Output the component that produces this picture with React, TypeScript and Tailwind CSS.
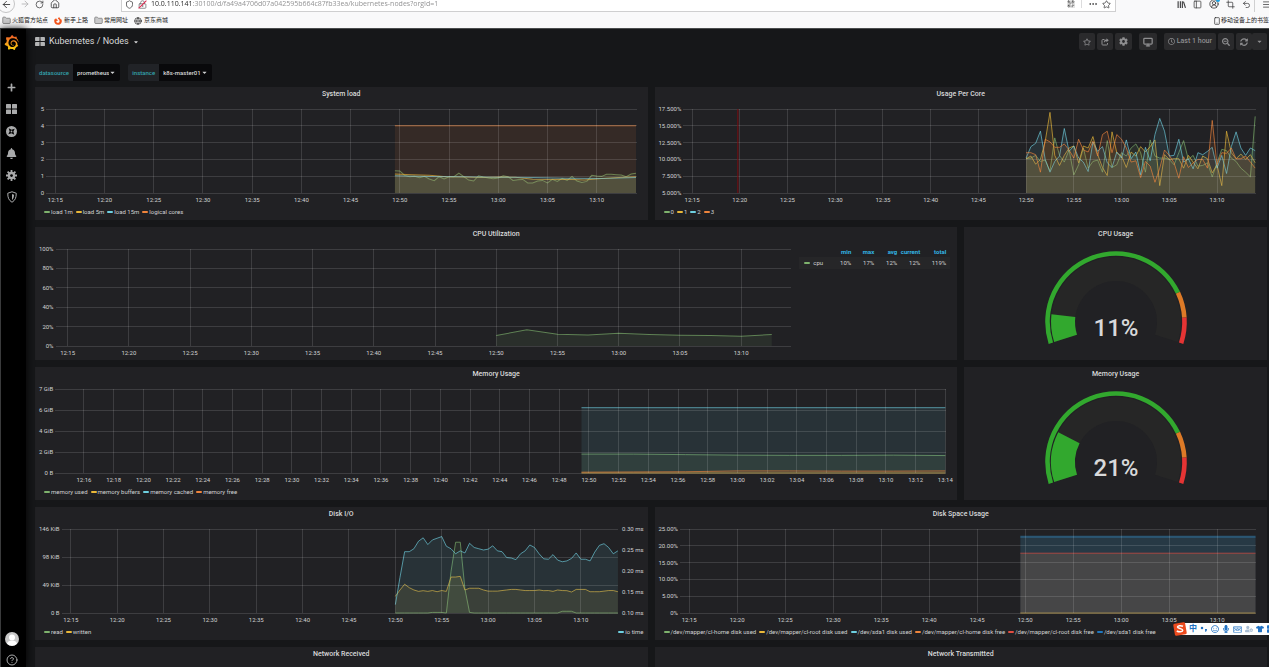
import type { ReactNode } from 'react';
import { SiGrafana } from 'react-icons/si';
import {
  FaBell,
  FaCaretDown,
  FaCog,
  FaPlus,
  FaRegClock,
  FaRegStar,
  FaSearchMinus,
  FaSyncAlt,
  FaTshirt,
  FaMicrophone,
  FaFirefoxBrowser,
  FaRegKeyboard,
  FaRegSmile,
  FaUserCog,
} from 'react-icons/fa';
import {
  ArrowLeft,
  ArrowRight,
  CircleHelp,
  CircleUserRound,
  Crop,
  Ellipsis,
  Folder,
  Globe,
  House,
  LockKeyhole,
  Menu,
  Monitor,
  PanelLeft,
  QrCode,
  RotateCw,
  Shield,
  Smartphone,
  Star,
  Undo2,
} from 'lucide-react';

const GREEN = '#7eb26d';
const YELLOW = '#eab839';
const BLUE = '#6ed0e0';
const ORANGE = '#ef843c';
const RED = '#e24d42';
const DARK_BLUE = '#1f78c1';

// minutes after 12:00
const RANGE_START = 14.05;
const RANGE_MINUTES = 60;

type Series = {
  color: string;
  start: number;
  step: number;
  values: number[];
  range?: [number, number];
  width?: number;
  fillOpacity?: number;
};

type LegendItem = { label: string; color: string };

const fiveMinuteTicks = [15, 20, 25, 30, 35, 40, 45, 50, 55, 60, 65, 70];
const twoMinuteTicks = Array.from({ length: 30 }, (_, i) => 16 + i * 2);

const formatTime = (minutes: number) =>
  `${12 + Math.floor(minutes / 60)}:${String(minutes % 60).padStart(2, '0')}`;

const loadSeries: Series[] = [
  {
    color: GREEN,
    start: 49.5,
    step: 0.5,
    values: [
      1.33, 1.31, 1.05, 0.97, 0.99, 0.91, 0.99, 0.83, 0.73, 0.97, 0.83, 0.97, 0.97, 1.19, 0.97, 0.77, 0.71,
      1.03, 0.95, 0.89, 0.85, 0.89, 1.03, 0.97, 0.75, 0.79, 0.81, 0.6, 0.6, 0.71, 0.75, 0.6, 0.81, 0.69,
      0.87, 0.75, 0.99, 0.71, 0.63, 0.69, 1.05, 1.01, 0.99, 1.11, 1.11, 1.09, 1.07, 0.97, 1.13, 1.17,
    ],
  },
  {
    color: YELLOW,
    start: 49.5,
    step: 1.75,
    values: [1.13, 1.08, 1.05, 0.97, 0.95, 0.93, 0.95, 0.94, 0.82, 0.8, 0.82, 0.78, 0.86, 0.93, 0.97],
  },
  { color: BLUE, start: 49.5, step: 3.5, values: [1.03, 0.98, 0.96, 0.94, 0.93, 0.88, 0.87, 0.92] },
  { color: ORANGE, start: 49.5, step: 24.5, values: [4, 4] },
];

const coreSeries: Series[] = [
  {
    color: GREEN,
    start: 50,
    step: 0.5,
    values: [
      10.1, 10.2, 10.6, 9.7, 9.9, 8.3, 13.2, 10.6, 9.6, 11.4, 7.7, 9.2, 11.7, 8.7, 9.7, 9.9, 8.1, 12.8, 8.8,
      9.2, 11, 10.5, 11.7, 12.3, 11, 8.1, 12.9, 10.5, 10.2, 10.2, 10, 9.2, 11, 12.8, 10, 10.6, 9, 9.1, 9.5,
      7.4, 9.5, 11.5, 11.3, 10.2, 9.7, 8.7, 8.1, 7.4, 16.4,
    ],
  },
  {
    color: YELLOW,
    start: 50,
    step: 0.5,
    values: [
      10.1, 10.5, 9.3, 10, 12.7, 17, 10.6, 9.1, 10.6, 11.7, 12, 9.5, 12, 11.7, 13.4, 10.7, 8.8, 7.6, 14.1,
      11, 10.5, 8.8, 11.1, 10.5, 11.9, 11.1, 11.9, 12.9, 6.1, 10.7, 10, 10.1, 10.1, 8.7, 10.6, 9.6, 8.6,
      10.5, 10.1, 8, 9.2, 6.1, 14.2, 11, 10.1, 10.8, 10, 10.7, 9.5,
    ],
  },
  {
    color: BLUE,
    start: 50,
    step: 0.5,
    values: [
      10.2, 11.9, 12.4, 14.2, 10, 8.1, 9.7, 10.5, 14.6, 11.2, 12, 10.2, 9.6, 8.2, 12.6, 11.2, 11.9, 9.5, 8.8,
      11.1, 10.2, 12.9, 10.1, 11.1, 7.7, 11.8, 9.8, 13.7, 16.1, 14.2, 10.5, 10.6, 13, 9.6, 10.1, 8.6, 11,
      10.7, 11.2, 11.8, 8.7, 10.6, 7.9, 11.9, 14.1, 11.7, 10.6, 11.7, 11.3,
    ],
  },
  {
    color: ORANGE,
    start: 50,
    step: 0.5,
    values: [
      11, 11, 10.7, 8.1, 13, 12.6, 11.8, 11.8, 12.3, 11.4, 10.2, 13, 11.4, 11.1, 12.7, 10.5, 13.7, 14.2, 11,
      13.7, 13, 11.7, 9.6, 9.8, 7.3, 9.7, 9, 6.6, 8.7, 11.4, 10.6, 9.5, 7.2, 10.4, 8.8, 9.5, 10, 10, 8.7,
      15.8, 9.2, 11, 10.9, 11.7, 10.1, 10.1, 10.5, 9.6, 8.7,
    ],
  },
];

const cpuSeries: Series[] = [
  { color: GREEN, start: 50, step: 2.5, values: [10.8, 16.7, 12, 11.4, 13.2, 11.8, 11.1, 10.8, 10, 11.8] },
];

const memorySeries: Series[] = [
  { color: GREEN, start: 49.5, step: 3.5, values: [1.8, 1.8, 1.75, 1.7, 1.68, 1.68, 1.7, 1.66] },
  { color: YELLOW, start: 49.5, step: 24.5, values: [0, 0] },
  { color: BLUE, start: 49.5, step: 24.5, values: [6.22, 6.22] },
  { color: ORANGE, start: 49.5, step: 3.5, values: [0.08, 0.1, 0.12, 0.2, 0.2, 0.18, 0.18, 0.2] },
];

const diskIoSeries: Series[] = [
  {
    color: GREEN,
    start: 50,
    step: 0.5,
    values: [
      0, 0, 0, 0, 0, 0, 0, 0, 1, 1, 1, 0, 72, 123, 123, 42, 1, 0, 0, 0, 0, 0, 0, 0, 0, 0, 0, 0, 0, 0, 0, 0, 0,
      0, 0, 0, 3, 3, 3, 0, 0, 0, 0, 0, 0, 0, 0, 0, 0,
    ],
  },
  {
    color: YELLOW,
    start: 50,
    step: 0.5,
    values: [
      29, 40, 50, 44, 40, 37.6, 38.8, 37.6, 39, 37, 39, 37.6, 62.5, 62.5, 63.7, 40, 43, 43, 43, 40, 38, 38, 38,
      39, 40, 41, 41, 40, 39, 39, 39, 40, 38.8, 39, 37.6, 40, 39, 38.8, 36.5, 41, 41, 41, 37, 37, 37, 38, 39,
      39, 37,
    ],
  },
  {
    color: BLUE,
    start: 50,
    step: 0.5,
    range: [0.1, 0.3],
    values: [
      0.12, 0.185, 0.246, 0.246, 0.253, 0.271, 0.279, 0.263, 0.274, 0.278, 0.282, 0.259, 0.253, 0.241, 0.248,
      0.243, 0.266, 0.256, 0.253, 0.25, 0.252, 0.26, 0.248, 0.246, 0.232, 0.231, 0.227, 0.241, 0.248, 0.262,
      0.256, 0.241, 0.229, 0.228, 0.239, 0.226, 0.222, 0.224, 0.23, 0.243, 0.228, 0.228, 0.224, 0.245, 0.261,
      0.265, 0.256, 0.241, 0.248,
    ],
  },
];

const diskSpaceSeries: Series[] = [
  { color: YELLOW, start: 49.5, step: 24.5, values: [0, 0] },
  { color: DARK_BLUE, start: 49.5, step: 24.5, values: [22.7, 22.7], width: 0 },
  { color: BLUE, start: 49.5, step: 24.5, values: [22.7, 22.7], width: 0 },
  { color: '#2f7099', start: 49.5, step: 24.5, values: [22.7, 22.7], width: 2, fillOpacity: 0 },
  { color: '#c37f4f', start: 49.5, step: 24.5, values: [17.8, 17.8], width: 0, fillOpacity: 0.2 },
  { color: RED, start: 49.5, step: 24.5, values: [17.8, 17.8], fillOpacity: 0 },
];

function Plot({
  ticks,
  rows,
  range,
  series,
  height,
  marker,
}: {
  ticks: number[];
  rows: number;
  range: [number, number];
  series: Series[];
  height: number;
  marker?: number;
}) {
  const toX = (minutes: number) => ((minutes - RANGE_START) / RANGE_MINUTES) * 100;

  const toPoints = (s: Series) => {
    const [min, max] = s.range ?? range;
    return s.values.map(
      (v, i) => `${toX(s.start + i * s.step).toFixed(3)},${(height - ((v - min) / (max - min)) * height).toFixed(2)}`
    );
  };

  return (
    <svg className="block w-full min-w-0 flex-1 overflow-visible" height={height}>
      <svg width="100%" height={height} viewBox={`0 0 100 ${height}`} preserveAspectRatio="none" overflow="visible">
        {series.map((s, i) => {
          const points = toPoints(s);
          const endX = toX(s.start + (s.values.length - 1) * s.step);
          return (
            <g key={i}>
              <polygon
                points={`${toX(s.start)},${height} ${points.join(' ')} ${endX},${height}`}
                fill={s.color}
                fillOpacity={s.fillOpacity ?? 0.1}
              />
              <polyline
                points={points.join(' ')}
                fill="none"
                stroke={s.color}
                strokeOpacity={0.65}
                strokeWidth={s.width ?? 1}
                vectorEffect="non-scaling-stroke"
              />
            </g>
          );
        })}
      </svg>
      {Array.from({ length: rows + 1 }, (_, i) => {
        const y = (height / rows) * i;
        return <line key={i} x1="0" x2="100%" y1={y} y2={y} stroke="#fff" strokeOpacity={0.13} shapeRendering="crispEdges" />;
      })}
      {ticks.map((t) => (
        <g key={t}>
          <line x1={`${toX(t)}%`} x2={`${toX(t)}%`} y1="0" y2={height} stroke="#fff" strokeOpacity={0.13} shapeRendering="crispEdges" />
          <text x={`${toX(t)}%`} y={height + 9} textAnchor="middle" fill="#d0d1d2" fontSize="6">
            {formatTime(t)}
          </text>
        </g>
      ))}
      {marker && (
        <line x1={`${toX(marker)}%`} x2={`${toX(marker)}%`} y1="0" y2={height} stroke="#7d0c10" />
      )}
    </svg>
  );
}

function AxisLabels({ labels, right }: { labels: string[]; right?: boolean }) {
  return (
    <div
      className={`-my-1 flex min-w-[11px] flex-col justify-between pl-1 text-[6px] leading-2 whitespace-nowrap ${
        right ? 'pr-1 text-left' : 'pr-0.5 text-right'
      }`}
    >
      {labels.map((label) => (
        <span key={label}>{label}</span>
      ))}
    </div>
  );
}

function Swatch({ color }: { color: string }) {
  return <span className="h-0.5 w-1.5 rounded-sm" style={{ backgroundColor: color }} />;
}

function Legend({ items }: { items: LegendItem[] }) {
  return (
    <ul className="flex gap-[3px] text-[6px] leading-3 whitespace-nowrap">
      {items.map((item) => (
        <li key={item.label} className="flex items-center gap-px">
          <Swatch color={item.color} />
          {item.label}
        </li>
      ))}
    </ul>
  );
}

function Panel({ title, className = '', children }: { title: string; className?: string; children?: ReactNode }) {
  return (
    <section className={`min-w-0 bg-[#212124] pb-0.5 ${className}`}>
      <h2 className="mb-[7px] text-center text-[7px] leading-[15px] font-medium text-[#d8d9da]">{title}</h2>
      {children}
    </section>
  );
}

function Gauge({ value }: { value: number }) {
  const point = (percent: number, r: number) => {
    const angle = ((-198 + percent * 2.16) * Math.PI) / 180;
    return `${(72 + r * Math.cos(angle)).toFixed(2)} ${(73 + r * Math.sin(angle)).toFixed(2)}`;
  };
  const band = (from: number, to: number, inner: number, outer: number) => {
    const large = (to - from) * 2.16 > 180 ? 1 : 0;
    return `M${point(from, outer)}A${outer} ${outer} 0 ${large} 1 ${point(to, outer)}L${point(to, inner)}A${inner} ${inner} 0 ${large} 0 ${point(from, inner)}Z`;
  };

  return (
    <svg viewBox="0 0 144 97" className="mx-auto block h-[97px] w-36">
      <path d={band(0, 100, 41, 65)} fill="#262626" />
      <path d={band(0, value, 41, 65)} fill="#32a82e" />
      <path d={band(0, 80, 66.2, 70.8)} fill="#32a82e" />
      <path d={band(80, 90, 66.2, 70.8)} fill="#dd7a27" />
      <path d={band(90, 100, 66.2, 70.8)} fill="#e53434" />
      <text x="72" y="87" textAnchor="middle" fontSize="24" fontWeight="500" fill="#d8d9da">
        {Math.floor(value)}%
      </text>
    </svg>
  );
}

function BrowserBar() {
  return (
    <div className="shrink-0 border-b border-[#4a4d4e] bg-[#f9f9fa] text-[#3c3c3d]">
      <div className="-mt-1 flex h-4 items-center">
        <div className="flex w-[121px] items-center gap-[5px]">
          <button aria-label="Back" className="-ml-[3px] flex size-[18px] items-center justify-center rounded-full border border-[#c4c4c5]">
            <ArrowLeft size={11} />
          </button>
          <button aria-label="Forward" className="text-[#b0b0b1]">
            <ArrowRight size={10} />
          </button>
          <button aria-label="Reload">
            <RotateCw size={9} />
          </button>
          <button aria-label="Home" className="ml-px">
            <House size={10} />
          </button>
        </div>
        <div className="flex h-4 min-w-0 flex-1 items-center border border-[#cfcfd0] bg-white pr-1 pl-[3px]">
          <Shield size={9} />
          <span className="relative mx-1 text-[#6b6b6c]">
            <LockKeyhole size={9} />
            <span className="absolute top-1 -left-px h-px w-[11px] -rotate-45 bg-[#e0284f]" />
          </span>
          <input
            aria-label="Address"
            className="min-w-0 flex-1 bg-[linear-gradient(to_right,#222_42px,#8c8c8d_42px)] bg-clip-text font-['Open_Sans',sans-serif] text-[7px] text-transparent outline-none"
            defaultValue="10.0.110.141:30100/d/fa49a4706d07a042595b664c87fb33ea/kubernetes-nodes?orgId=1"
          />
          <QrCode size={8} />
          <span className="mx-1.5 h-2 w-px bg-[#dcdcdd]" />
          <button aria-label="Page actions">
            <Ellipsis size={10} />
          </button>
          <button aria-label="Bookmark page" className="ml-1">
            <Star size={9} />
          </button>
        </div>
        <div className="ml-[61px] flex items-center gap-[7px]">
          <svg viewBox="0 0 16 16" className="size-[9px]" stroke="currentColor" strokeWidth="2">
            <path d="M2 2v12M6 2v12M9.500 2v12M11.500 3l3.500 11" fill="none" />
          </svg>
          <PanelLeft size={9} />
          <span className="relative">
            <CircleUserRound size={10} />
            <span className="absolute -top-px -right-px size-1 rounded-full bg-[#16a3e8]" />
          </span>
          <Crop size={9} />
          <Undo2 size={9} />
          <span className="-ml-1 h-4 w-px bg-[#d0d0d1]" />
          <Menu size={9} className="-mr-0.5" />
        </div>
      </div>
      <nav className="flex h-4 items-center gap-1.5 overflow-hidden pt-px pl-0.5 font-['Liberation_Sans','Noto_Sans_CJK_SC',sans-serif] text-[6px] whitespace-nowrap text-[#222]">
        <a href="#" className="flex items-center gap-px">
          <Folder size={9} className="fill-[#c9c9ca] text-[#757576]" />
          火狐官方站点
        </a>
        <a href="#" className="flex items-center gap-0.5">
          <FaFirefoxBrowser size={8} className="text-[#f2541b]" />
          新手上路
        </a>
        <a href="#" className="flex items-center gap-px">
          <Folder size={9} className="fill-[#c9c9ca] text-[#757576]" />
          常用网址
        </a>
        <a href="#" className="flex items-center gap-0.5">
          <Globe size={8} />
          京东商城
        </a>
        <a href="#" className="ml-auto flex items-center">
          <Smartphone size={8} />
          移动设备上的书签
        </a>
      </nav>
    </div>
  );
}

function DashboardsIcon({ className }: { className: string }) {
  return (
    <svg viewBox="0 0 22 20" className={className} fill="currentColor">
      <rect x="0" y="0" width="10" height="9" rx="1" />
      <rect x="12" y="0" width="10" height="9" rx="1" />
      <rect x="0" y="11" width="10" height="9" rx="1" />
      <rect x="12" y="11" width="10" height="9" rx="1" />
    </svg>
  );
}

// eight-tooth cog, fuller than the Font Awesome one
function CogIcon({ className }: { className: string }) {
  return (
    <svg viewBox="0 0 24 24" className={className}>
      <g stroke="currentColor" strokeWidth="4">
        <path d="M12 0v24M0 12h24M3.500 3.500l17 17M20.500 3.500l-17 17" />
      </g>
      <circle cx="12" cy="12" r="8" fill="currentColor" />
      <circle cx="12" cy="12" r="3" className="fill-black" />
    </svg>
  );
}

function Sidebar() {
  const items = [
    { label: 'Create', icon: <FaPlus size={9} /> },
    { label: 'Dashboards', icon: <DashboardsIcon className="h-2.5 w-[11px]" /> },
    {
      label: 'Explore',
      icon: (
        <svg viewBox="0 0 24 24" className="size-[11px]">
          <circle cx="12" cy="12" r="12" fill="currentColor" />
          <path d="M6 5l6 3 7-2-3 6 2 7-6-3-7 2 3-6z" fill="#000" />
          <circle cx="12" cy="12" r="2" fill="currentColor" />
        </svg>
      ),
    },
    { label: 'Alerting', icon: <FaBell size={11} /> },
    { label: 'Configuration', icon: <CogIcon className="size-[11px]" /> },
    {
      label: 'Server Admin',
      icon: (
        <svg viewBox="0 0 20 24" className="h-3 w-2.5" fill="none" stroke="currentColor" strokeWidth="2">
          <path d="M10 1.500l8.500 3c0 9-2 14-8.500 18-6.500-4-8.500-9-8.500-18z" />
          <path d="M10 6l4 1.500c0 5-1 8-4 10.500z" fill="currentColor" stroke="none" />
        </svg>
      ),
    },
  ];

  return (
    <aside className="z-10 flex w-[26px] shrink-0 flex-col items-center border-l border-[#3a3b3c] bg-black pr-1 text-[#a9aaab] shadow-[0_0_8px_#000]">
      <a href="#" aria-label="Grafana" className="mt-1.5">
        <svg width="0" height="0" className="absolute">
          <linearGradient id="logo" x1="0" y1="1" x2="0" y2="0">
            <stop offset="0" stopColor="#fbd30f" />
            <stop offset="1" stopColor="#f05a28" />
          </linearGradient>
        </svg>
        <SiGrafana size={15} fill="url(#logo)" />
      </a>
      <nav className="mt-[26px] flex flex-col">
        {items.map((item) => (
          <a key={item.label} href="#" aria-label={item.label} className="flex h-[22px] items-center justify-center">
            {item.icon}
          </a>
        ))}
      </nav>
      <a href="#" aria-label="Profile" className="mt-auto mb-2">
        <svg viewBox="0 0 28 28" className="size-3.5">
          <circle cx="14" cy="14" r="14" fill="#c9c9c9" />
          <circle cx="14" cy="11" r="6" fill="#fff" />
          <path d="M4 23.500c1-5 5-6 10-6s9 1 10 6a14 14 0 0 1-20 0z" fill="#fff" />
        </svg>
      </a>
      <a href="#" aria-label="Help" className="mb-px">
        <CircleHelp size={12} />
      </a>
    </aside>
  );
}

function ToolButton({ label, children, className = '' }: { label: string; children: ReactNode; className?: string }) {
  return (
    <button
      aria-label={label}
      className={`flex h-[17px] items-center justify-center gap-0.5 rounded-xs bg-[#2a2a2c] px-1 text-[#8e8e90] ${className}`}
    >
      {children}
    </button>
  );
}

function Variable({ name, value }: { name: string; value: string }) {
  return (
    <div className="flex h-[17px] items-stretch overflow-hidden rounded-xs text-[6px] leading-[17px] font-medium">
      <label htmlFor={name} className="bg-[#212327] px-1 text-[#33a2ad]">
        {name}
      </label>
      <div className="flex items-center bg-[#09090b] px-1">
        <select id={name} className="field-sizing-content appearance-none bg-transparent text-[#d8d9da] outline-none">
          <option>{value}</option>
        </select>
        <FaCaretDown size={7} />
      </div>
    </div>
  );
}

const cpuStats = [
  { label: 'min', value: '10%' },
  { label: 'max', value: '17%' },
  { label: 'avg', value: '12%' },
  { label: 'current', value: '12%' },
  { label: 'total', value: '119%' },
];

function CpuTable() {
  return (
    <table className="w-[151px] shrink-0 table-fixed text-right text-[6px]">
      <thead>
        <tr className="h-2 align-top leading-[6px] font-bold text-[#33b5e5]">
          <td className="w-[29px]" />
          {cpuStats.map((s) => (
            <th key={s.label} scope="col" className="w-[23px] last:w-[30px] last:pr-1">
              {s.label}
            </th>
          ))}
        </tr>
      </thead>
      <tbody>
        <tr className="h-3 bg-[#262628] leading-3">
          <th scope="row" className="pl-[5px] font-normal">
            <span className="flex items-center gap-[3px]">
              <Swatch color={GREEN} />
              cpu
            </span>
          </th>
          {cpuStats.map((s) => (
            <td key={s.label} className="last:pr-1">
              {s.value}
            </td>
          ))}
        </tr>
      </tbody>
    </table>
  );
}

function InputToolbar() {
  return (
    <div className="absolute -right-0.5 bottom-8 z-20 flex h-3 items-center gap-[3px] bg-white pl-2 text-[#2272c3]">
      <svg viewBox="0 0 28 28" className="absolute -top-px -left-2 size-3.5">
        <rect x="2" y="2" width="24" height="24" rx="3" fill="#ee4b1e" transform="rotate(-10 14 14)" />
        <path
          d="M20 8.500c-4-2-11-1.500-11 1.500s10.500 3 10.500 6.500-7.500 4-12 1.500"
          fill="none"
          stroke="#fff"
          strokeWidth="3"
        />
      </svg>
      <span className="font-['Liberation_Sans','Noto_Sans_CJK_SC',sans-serif] text-[8px] leading-3 font-bold">中</span>
      <svg viewBox="0 0 16 16" className="size-2" fill="currentColor">
        <circle cx="4" cy="6" r="2.500" />
        <path d="M10 8h4c0 3-1 5-3.500 6z" />
      </svg>
      <FaRegSmile size={8} />
      <FaMicrophone size={8} />
      <FaRegKeyboard size={9} />
      <FaUserCog size={8} className="text-[#a9bdd3]" />
      <FaTshirt size={8} />
      <DashboardsIcon className="-mr-1 size-2" />
    </div>
  );
}

export default function App() {
  return (
    <div className="relative flex h-screen flex-col overflow-hidden bg-[#161719] font-[Roboto,sans-serif] text-[#d0d1d2]">
      <BrowserBar />

      <div className="flex min-h-0 flex-1">
        <Sidebar />

        <main className="min-w-0 flex-1 overflow-y-auto pr-0.5 pl-[9px] [scrollbar-width:none]">
          {/* Dashboard toolbar */}
          <header className="flex items-center py-1">
            <button className="flex items-center gap-1 text-[9px] leading-[17px] text-[#d8d9da]">
              <DashboardsIcon className="h-[9px] w-2.5 text-[#b4b5b6]" />
              Kubernetes / Nodes
              <FaCaretDown size={6} />
            </button>
            <div className="ml-auto flex gap-0.5">
              <ToolButton label="Mark as favorite">
                <FaRegStar size={8} />
              </ToolButton>
              <ToolButton label="Share dashboard">
                <svg viewBox="0 0 16 16" className="size-2" fill="none" stroke="currentColor" strokeWidth="2">
                  <path d="M7 3H3.500a1.500 1.500 0 0 0-1.500 1.500v8a1.500 1.500 0 0 0 1.500 1.500h8a1.500 1.500 0 0 0 1.500-1.500V10" />
                  <path d="M11 0.500l4.500 4-4.500 4V6.500c-3 0-4.500 1-5 3.500 -1-4 1-7 5-7z" fill="currentColor" stroke="none" />
                </svg>
              </ToolButton>
              <ToolButton label="Dashboard settings">
                <FaCog size={9} />
              </ToolButton>
              <ToolButton label="Cycle view mode" className="mx-[5px]">
                <Monitor size={10} strokeWidth={3} />
              </ToolButton>
              <ToolButton label="Last 1 hour">
                <FaRegClock size={7} />
                <span className="text-[7px] font-medium">Last 1 hour</span>
              </ToolButton>
              <ToolButton label="Time range zoom out">
                <FaSearchMinus size={8} />
              </ToolButton>
              <div className="flex">
                <ToolButton label="Refresh dashboard">
                  <FaSyncAlt size={8} />
                </ToolButton>
                <ToolButton label="Refresh interval">
                  <FaCaretDown size={7} />
                </ToolButton>
              </div>
            </div>
          </header>

          {/* Template variables */}
          <div className="mt-2.5 mb-1.5 flex gap-2">
            <Variable name="datasource" value="prometheus" />
            <Variable name="instance" value="k8s-master01" />
          </div>

          <div className="grid grid-cols-4 gap-[7px]">
            <Panel title="System load" className="col-span-2">
              <div className="mb-[13px] flex pr-[11px]">
                <AxisLabels labels={['5', '4', '3', '2', '1', '0']} />
                <Plot ticks={fiveMinuteTicks} rows={5} range={[0, 5]} series={loadSeries} height={84} />
              </div>
              <div className="px-[9px]">
                <Legend
                  items={[
                    { label: 'load 1m', color: GREEN },
                    { label: 'load 5m', color: YELLOW },
                    { label: 'load 15m', color: BLUE },
                    { label: 'logical cores', color: ORANGE },
                  ]}
                />
              </div>
            </Panel>

            <Panel title="Usage Per Core" className="col-span-2">
              <div className="mb-[13px] flex pr-[11px]">
                <AxisLabels labels={['17.500%', '15.000%', '12.500%', '10.000%', '7.500%', '5.000%']} />
                <Plot ticks={fiveMinuteTicks} rows={5} range={[5, 17.5]} series={coreSeries} height={84} marker={19.8} />
              </div>
              <div className="px-[9px]">
                <Legend
                  items={[
                    { label: '0', color: GREEN },
                    { label: '1', color: YELLOW },
                    { label: '2', color: BLUE },
                    { label: '3', color: ORANGE },
                  ]}
                />
              </div>
            </Panel>

            <Panel title="CPU Utilization" className="col-span-3">
              <div className="flex items-start gap-[9px] pr-[7px]">
                <div className="mb-3 flex min-w-0 flex-1">
                  <AxisLabels labels={['100%', '80%', '60%', '40%', '20%', '0%']} />
                  <Plot ticks={fiveMinuteTicks} rows={5} range={[0, 100]} series={cpuSeries} height={97} />
                </div>
                <CpuTable />
              </div>
            </Panel>

            <Panel title="CPU Usage">
              <Gauge value={11.5} />
            </Panel>

            <Panel title="Memory Usage" className="col-span-3">
              <div className="mb-[13px] flex pr-[11px]">
                <AxisLabels labels={['7 GiB', '6 GiB', '4 GiB', '2 GiB', '0 B']} />
                <Plot ticks={twoMinuteTicks} rows={4} range={[0, 8]} series={memorySeries} height={84} />
              </div>
              <div className="px-[9px]">
                <Legend
                  items={[
                    { label: 'memory used', color: GREEN },
                    { label: 'memory buffers', color: YELLOW },
                    { label: 'memory cached', color: BLUE },
                    { label: 'memory free', color: ORANGE },
                  ]}
                />
              </div>
            </Panel>

            <Panel title="Memory Usage">
              <Gauge value={21} />
            </Panel>

            <Panel title="Disk I/O" className="col-span-2">
              <div className="mb-[13px] flex">
                <AxisLabels labels={['146 KiB', '98 KiB', '49 KiB', '0 B']} />
                <Plot ticks={fiveMinuteTicks} rows={3} range={[0, 146]} series={diskIoSeries} height={84} />
                <AxisLabels right labels={['0.30 ms', '0.25 ms', '0.20 ms', '0.15 ms', '0.10 ms']} />
              </div>
              <div className="flex justify-between pr-1 pl-[9px]">
                <Legend
                  items={[
                    { label: 'read', color: GREEN },
                    { label: 'written', color: YELLOW },
                  ]}
                />
                <Legend items={[{ label: 'io time', color: BLUE }]} />
              </div>
            </Panel>

            <Panel title="Disk Space Usage" className="col-span-2">
              <div className="mb-[13px] flex pr-[11px]">
                <AxisLabels labels={['25.00%', '20.00%', '15.00%', '10.00%', '5.00%', '0%']} />
                <Plot ticks={fiveMinuteTicks} rows={5} range={[0, 25]} series={diskSpaceSeries} height={84} />
              </div>
              <div className="px-[9px]">
                <Legend
                  items={[
                    { label: '/dev/mapper/cl-home disk used', color: GREEN },
                    { label: '/dev/mapper/cl-root disk used', color: YELLOW },
                    { label: '/dev/sda1 disk used', color: BLUE },
                    { label: '/dev/mapper/cl-home disk free', color: ORANGE },
                    { label: '/dev/mapper/cl-root disk free', color: RED },
                    { label: '/dev/sda1 disk free', color: DARK_BLUE },
                  ]}
                />
              </div>
            </Panel>

            <Panel title="Network Received" className="col-span-2" />
            <Panel title="Network Transmitted" className="col-span-2" />
          </div>
        </main>
      </div>

      <InputToolbar />
    </div>
  );
}
